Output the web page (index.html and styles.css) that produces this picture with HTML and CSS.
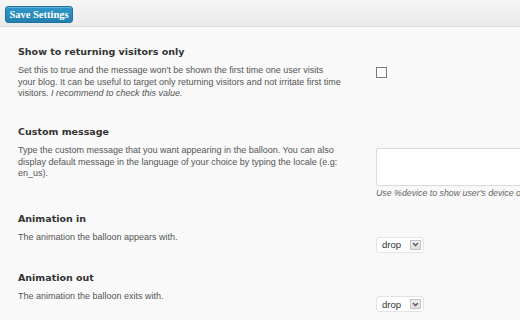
FILE: index.html
```html
<!DOCTYPE html>
<html>
<head>
  <meta charset="UTF-8">
  <title>Balloon Settings</title>
  <link rel="stylesheet" href="styles.css">
</head>
<body>
  <div class="toolbar">
    <button class="btn-save">Save Settings</button>
  </div>

  <div class="settings">
    <section class="setting">
      <h3>Show to returning visitors only</h3>
      <div class="setting-row">
        <p class="setting-desc">Set this to true and the message won't be shown the first time one user visits your blog. It can be useful to target only returning visitors and not irritate first time visitors. <em>I recommend to check this value.</em></p>
        <div class="setting-control">
          <input type="checkbox" class="checkbox">
        </div>
      </div>
    </section>

    <section class="setting setting-tight">
      <h3>Custom message</h3>
      <div class="setting-row">
        <p class="setting-desc">Type the custom message that you want appearing in the balloon. You can also display default message in the language of your choice by typing the locale (e.g: en_us).</p>
        <div class="setting-control">
          <textarea class="textarea"></textarea>
          <p class="hint">Use %device to show user's device on the message.</p>
        </div>
      </div>
    </section>

    <section class="setting">
      <h3>Animation in</h3>
      <div class="setting-row">
        <p class="setting-desc">The animation the balloon appears with.</p>
        <div class="setting-control">
          <div class="select">
            <span class="select-value">drop</span>
            <span class="select-arrow">
              <svg width="7" height="5" viewBox="0 0 7 5"><path d="M1 1 L3.5 3.5 L6 1" fill="none" stroke="#555" stroke-width="1.3"/></svg>
            </span>
          </div>
        </div>
      </div>
    </section>

    <section class="setting">
      <h3>Animation out</h3>
      <div class="setting-row">
        <p class="setting-desc">The animation the balloon exits with.</p>
        <div class="setting-control">
          <div class="select">
            <span class="select-value">drop</span>
            <span class="select-arrow">
              <svg width="7" height="5" viewBox="0 0 7 5"><path d="M1 1 L3.5 3.5 L6 1" fill="none" stroke="#555" stroke-width="1.3"/></svg>
            </span>
          </div>
        </div>
      </div>
    </section>
  </div>
</body>
</html>
```

FILE: styles.css
```css
html, body {
  margin: 0;
  overflow: hidden;
}
body {
  background: #f9f9f9;
  font-family: "Liberation Sans", Arial, sans-serif;
}
.toolbar {
  height: 27px;
  padding: 4px 5px 0;
  box-sizing: border-box;
  background: linear-gradient(#f6f6f6, #eaeaea);
  border-bottom: 1px solid #e0e0e0;
}
.btn-save {
  height: 17px;
  width: 68px;
  padding: 0;
  border: 1px solid #20749b;
  border-radius: 3px;
  background: linear-gradient(#2f98c9, #2380ae);
  color: #fff;
  font-family: "Liberation Serif", "Times New Roman", serif;
  font-weight: bold;
  font-size: 10.5px;
  line-height: 15px;
  box-shadow: inset 0 1px 0 rgba(255,255,255,0.25);
}
.settings {
  padding: 17px 0 0 18px;
}
.setting {
  margin-bottom: 17.5px;
}
.setting-tight {
  margin-bottom: 11.5px;
}
.setting h3 {
  margin: 0 0 5px;
  font-family: "DejaVu Sans", Verdana, sans-serif;
  font-size: 9.5px;
  line-height: 16px;
  color: #333;
}
.setting-row {
  display: flex;
  align-items: flex-start;
  gap: 35px;
}
.setting-desc {
  width: 323px;
  flex: none;
  margin: 0 0 7px;
  font-size: 9px;
  line-height: 11.5px;
  color: #555;
}
.setting-control {
  flex: none;
}
.checkbox {
  appearance: none;
  display: block;
  width: 11px;
  height: 11px;
  margin: 2px 0 0;
  border: 1px solid #7a7a7a;
  background: #fdfdfd;
}
.textarea {
  display: block;
  width: 240px;
  height: 38px;
  margin: 3px 0 0;
  box-sizing: border-box;
  border: 1px solid #dcdcdc;
  border-radius: 2px;
  background: #fff;
  box-shadow: 0 0 2px rgba(0,0,0,0.06);
  resize: none;
}
.hint {
  margin: 2px 0 0;
  white-space: nowrap;
  font-size: 8.8px;
  font-style: italic;
  line-height: 11px;
  color: #666;
}
.select {
  display: flex;
  align-items: center;
  justify-content: space-between;
  width: 48px;
  height: 16px;
  margin-top: 5px;
  padding: 0 2px 0 5px;
  box-sizing: border-box;
  border: 1px solid #e3e3e3;
  border-radius: 3px;
  background: #fff;
}
.select-value {
  font-size: 9.6px;
  color: #333;
}
.select-arrow {
  display: flex;
  align-items: center;
  justify-content: center;
  width: 11px;
  height: 10px;
  border: 1px solid #c4c4c4;
  background: linear-gradient(#f0f0f0, #dcdcdc);
  box-sizing: border-box;
}
```
